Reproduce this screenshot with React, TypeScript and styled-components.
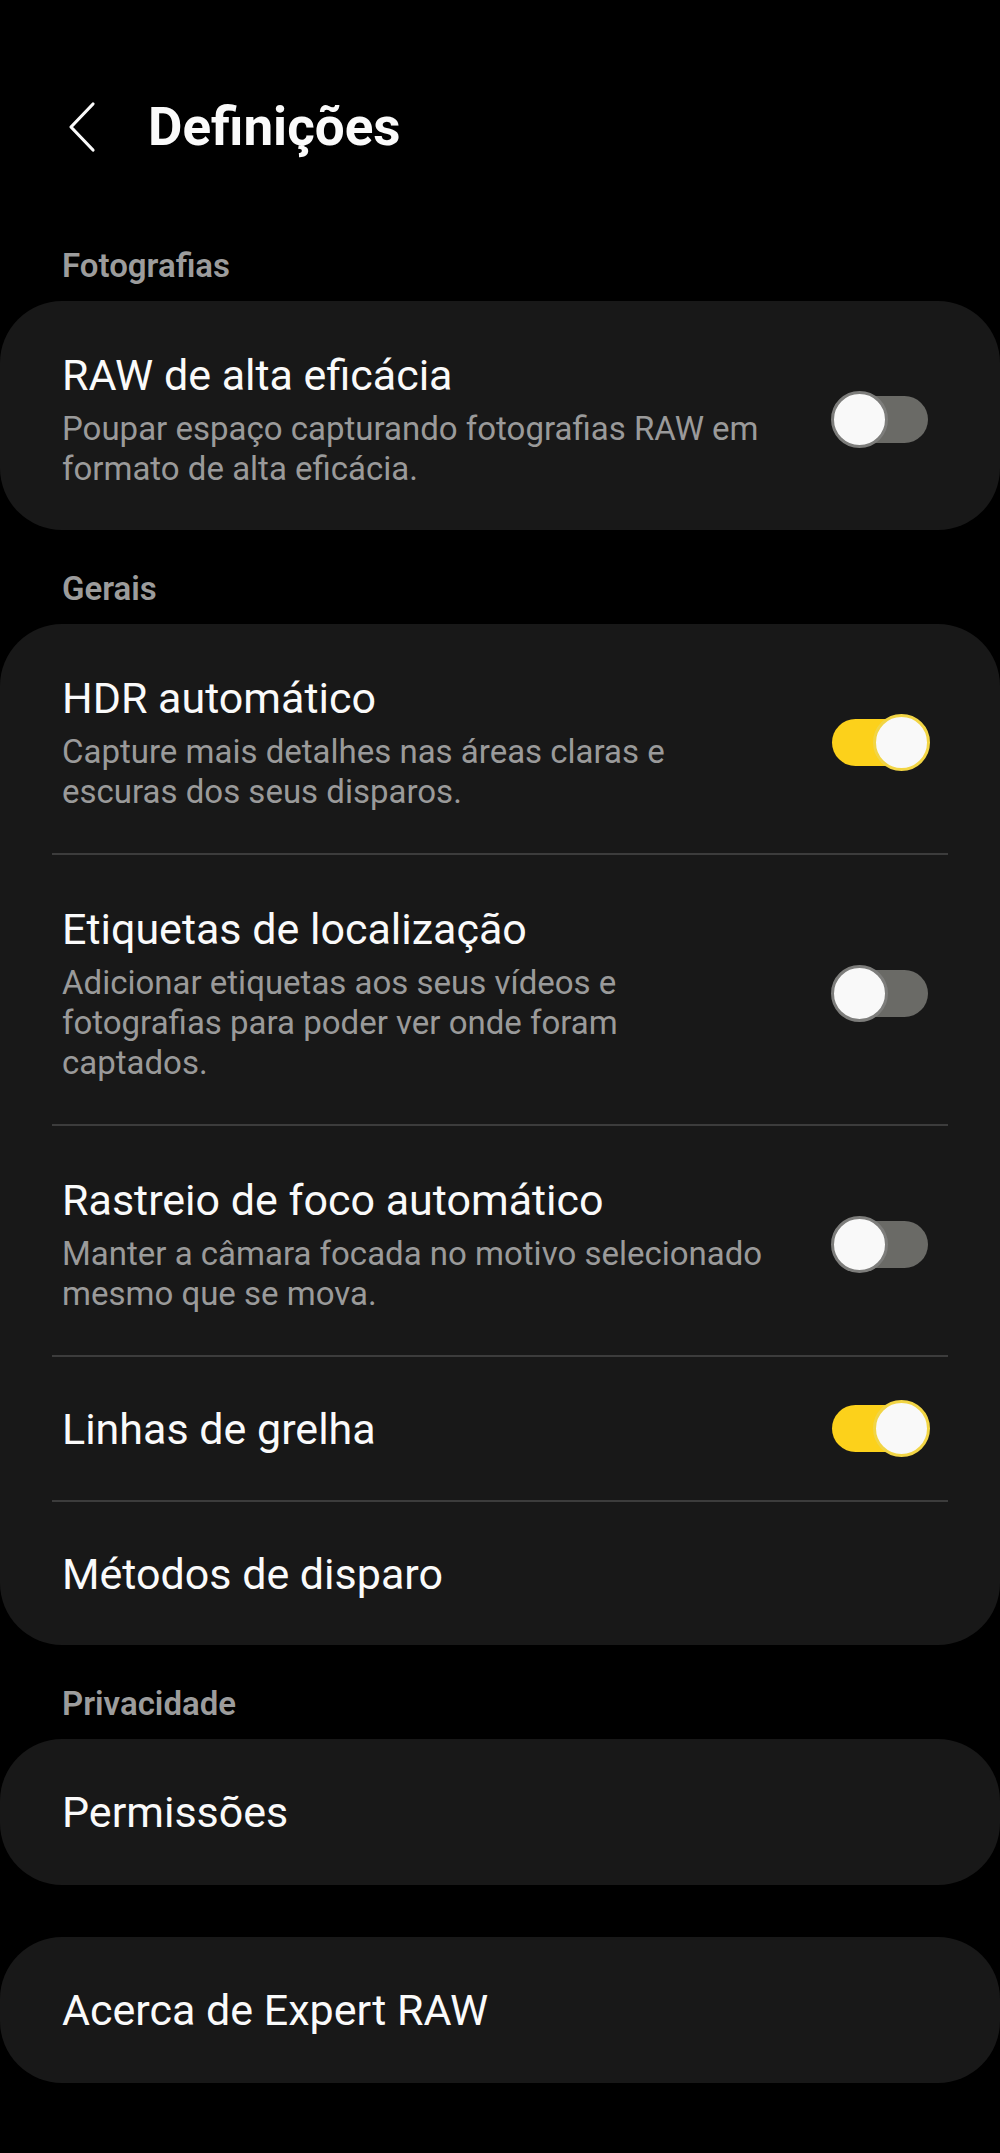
import React from 'react'
import styled, { createGlobalStyle } from 'styled-components'

const GlobalStyle = createGlobalStyle`
  body {
    margin: 0;
    background: #000;
    font-family: Roboto, "Liberation Sans", sans-serif;
  }
`

const Page = styled.div`
  min-height: 2153px;
  box-sizing: border-box;
  background: #000;
  color: #fafafa;
  padding-bottom: 68px;
`

const Header = styled.div`
  display: flex;
  align-items: center;
  padding: 101px 0 0 68px;
  height: 52px;
`

const BackButton = styled.div`
  width: 30px;
  height: 52px;
  display: flex;
  align-items: center;
  margin-right: 50px;
`

const Title = styled.h1`
  margin: 0;
  font-size: 53px;
  line-height: 52px;
  font-weight: 700;
  color: #fafafa;
`

const SectionLabel = styled.div`
  padding: 0 62px;
  font-size: 33px;
  line-height: 40px;
  font-weight: 600;
  color: #9c9c9c;
  margin-bottom: 15px;
`

const Section = styled.section<{ $top: number }>`
  margin-top: ${p => p.$top}px;
`

const Card = styled.div`
  background: #181818;
  border-radius: 62px;
  overflow: hidden;
`

const Row = styled.div<{ $hasSub: boolean; $h: number }>`
  display: flex;
  align-items: center;
  box-sizing: border-box;
  min-height: ${p => p.$h}px;
  padding: ${p => (p.$hasSub ? '49px 72px 41px 62px' : '0 72px 0 62px')};
`

const TextCol = styled.div`
  flex: 1;
  min-width: 0;
`

const RowTitle = styled.div`
  font-size: 43px;
  line-height: 50px;
  color: #fafafa;
`

const RowSub = styled.div`
  margin-top: 9px;
  font-size: 33px;
  line-height: 40px;
  color: #9a9a9a;
  white-space: nowrap;
`

const Divider = styled.div`
  height: 2px;
  margin: 0 52px;
  background: #3c3c3c;
`

const Switch = styled.div<{ $on: boolean }>`
  position: relative;
  flex: none;
  width: 96px;
  height: 47px;
  border-radius: 24px;
  background: ${p => (p.$on ? '#fcd11b' : '#6a6a66')};
`

const Knob = styled.div<{ $on: boolean }>`
  position: absolute;
  top: -5px;
  left: ${p => (p.$on ? '41px' : '-1px')};
  width: 57px;
  height: 57px;
  box-sizing: border-box;
  border-radius: 50%;
  background: #f9f9f9;
  border: 3px solid ${p => (p.$on ? '#f2d545' : '#7d7d7b')};
`

type Item = { title: string; sub?: string[]; toggle?: boolean }
type Group = { label?: string; top: number; items: Item[] }

const groups: Group[] = [
  {
    label: 'Fotografias',
    top: 93,
    items: [
      {
        title: 'RAW de alta eficácia',
        sub: ['Poupar espaço capturando fotografias RAW em', 'formato de alta eficácia.'],
        toggle: false,
      },
    ],
  },
  {
    label: 'Gerais',
    top: 39,
    items: [
      {
        title: 'HDR automático',
        sub: ['Capture mais detalhes nas áreas claras e', 'escuras dos seus disparos.'],
        toggle: true,
      },
      {
        title: 'Etiquetas de localização',
        sub: ['Adicionar etiquetas aos seus vídeos e', 'fotografias para poder ver onde foram', 'captados.'],
        toggle: false,
      },
      {
        title: 'Rastreio de foco automático',
        sub: ['Manter a câmara focada no motivo selecionado', 'mesmo que se mova.'],
        toggle: false,
      },
      { title: 'Linhas de grelha', toggle: true },
      { title: 'Métodos de disparo' },
    ],
  },
  {
    label: 'Privacidade',
    top: 39,
    items: [{ title: 'Permissões' }],
  },
  {
    top: 52,
    items: [{ title: 'Acerca de Expert RAW' }],
  },
]

const BackIcon = () => (
  <svg width="30" height="52" viewBox="0 0 30 52">
    <polyline points="25,3 3,26 25,49" fill="none" stroke="#fafafa" strokeWidth="3.2" strokeLinecap="round" strokeLinejoin="round" />
  </svg>
)

const App = () => {
  return (
    <Page>
      <GlobalStyle />
      <Header>
        <BackButton>
          <BackIcon />
        </BackButton>
        <Title>Definições</Title>
      </Header>
      {groups.map((g, gi) => (
        <Section key={gi} $top={g.top}>
          {g.label && <SectionLabel>{g.label}</SectionLabel>}
          <Card>
            {g.items.map((it, i) => (
              <React.Fragment key={it.title}>
                {i > 0 && <Divider />}
                <Row $hasSub={!!it.sub} $h={g.items.length === 1 ? 146 : 143}>
                  <TextCol>
                    <RowTitle>{it.title}</RowTitle>
                    {it.sub && (
                      <RowSub>
                        {it.sub.map((line, li) => (
                          <div key={li}>{line}</div>
                        ))}
                      </RowSub>
                    )}
                  </TextCol>
                  {it.toggle !== undefined && (
                    <Switch $on={it.toggle}>
                      <Knob $on={it.toggle} />
                    </Switch>
                  )}
                </Row>
              </React.Fragment>
            ))}
          </Card>
        </Section>
      ))}
    </Page>
  )
}

export default App
